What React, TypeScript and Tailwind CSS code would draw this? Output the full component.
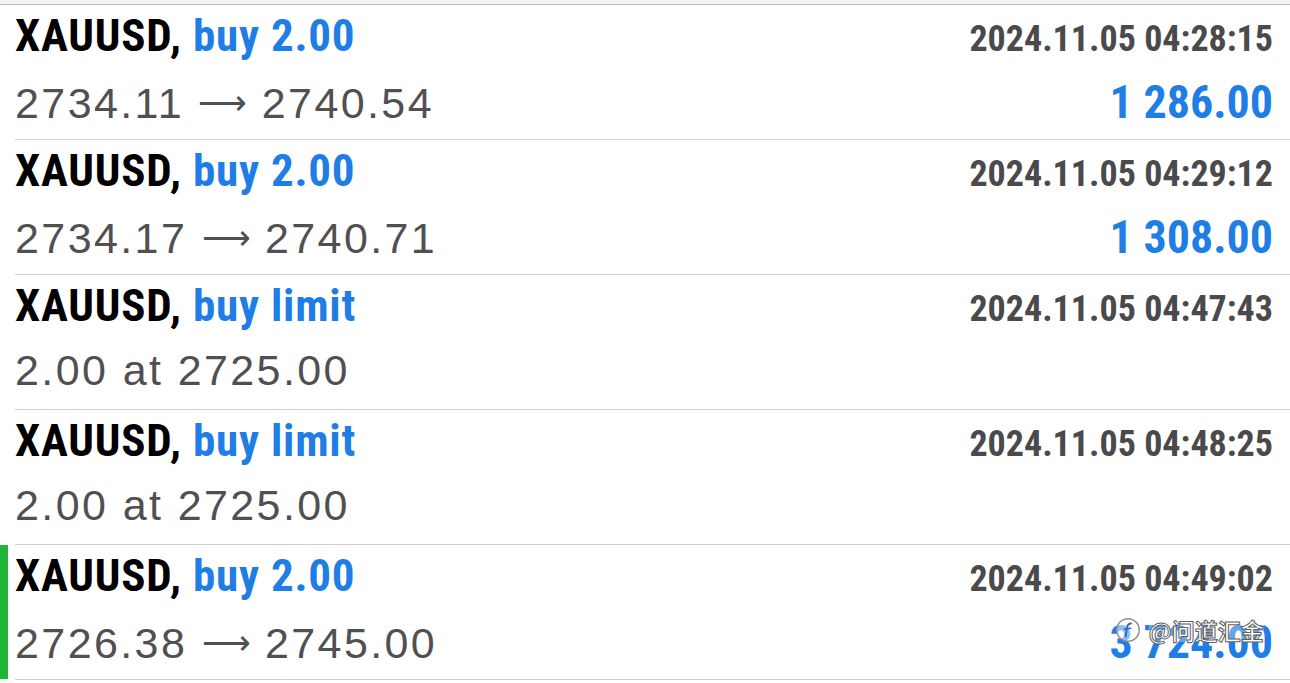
import React from "react";

type Row = {
  action: string;
  date: string;
  a: string;
  b?: string;
  profit?: string;
  active?: boolean;
  watermark?: boolean;
};

const rows: Row[] = [
  { action: "buy 2.00", date: "2024.11.05 04:28:15", a: "2734.11", b: "2740.54", profit: "1 286.00" },
  { action: "buy 2.00", date: "2024.11.05 04:29:12", a: "2734.17", b: "2740.71", profit: "1 308.00" },
  { action: "buy limit", date: "2024.11.05 04:47:43", a: "2.00 at 2725.00" },
  { action: "buy limit", date: "2024.11.05 04:48:25", a: "2.00 at 2725.00" },
  { action: "buy 2.00", date: "2024.11.05 04:49:02", a: "2726.38", b: "2745.00", profit: "3 724.00", active: true, watermark: true },
];

const narrow = { fontFamily: '"Roboto Condensed", Roboto, sans-serif' };
const regular = { fontFamily: '"Liberation Sans", Arial, sans-serif' };

function Watermark() {
  return (
    <div className="absolute left-[5px] top-[-2px] flex items-center gap-[8px] whitespace-nowrap">
      <svg width="26" height="26" viewBox="0 0 30 30">
        <circle cx="15" cy="15" r="13" fill="white" fillOpacity="0.5" stroke="#8f8f8f" strokeWidth="1.6" />
        <path d="M18.5 7.5 C15.5 7.5 14.3 9.5 13.8 12.5 L12.2 22.5" stroke="#2a6fd0" strokeWidth="2.4" fill="none" strokeLinecap="round" />
        <path d="M11 14 L18 13" stroke="#2a6fd0" strokeWidth="2" strokeLinecap="round" />
      </svg>
      <span
        className="bg-white/30 text-[23px] leading-none text-white"
        style={{
          fontFamily: '"Noto Sans CJK SC", sans-serif',
          WebkitTextStroke: "1px #5f5f5f",
        }}
      >
        @问道汇金
      </span>
    </div>
  );
}

function TradeRow({ r }: { r: Row }) {
  return (
    <div className="relative h-[135px]">
      {r.active && <div className="absolute left-0 top-[0px] h-[134px] w-[8px] bg-[#1fb536]" />}
      <div className="ml-[15px] flex h-full flex-col border-b border-[#cfcfcf] pr-[17px]">
        <div className="flex h-[58px] items-baseline justify-between pt-[8px]">
          <div className="text-[45px] font-bold leading-none tracking-[0.8px]" style={narrow}>
            <span className="text-black">XAUUSD, </span>
            <span className="text-[#1f7de6]">{r.action}</span>
          </div>
          <div className="text-[36px] font-bold leading-none text-[#4a4a4c]" style={narrow}>
            {r.date}
          </div>
        </div>
        <div className="flex flex-1 items-baseline justify-between pt-[16px]">
          <div className="whitespace-nowrap text-[43px] leading-none tracking-[2.4px] text-[#505053]" style={regular}>
            {r.a}
            {r.b && (
              <>
                {" "}
                <span
                  className="relative top-[-4px] text-[34px] tracking-normal"
                  style={{ fontFamily: '"DejaVu Sans", sans-serif', fontWeight: 200 }}
                >
                  ⟶
                </span>{" "}
                {r.b}
              </>
            )}
          </div>
          {r.profit && (
            <div className="relative whitespace-nowrap text-[46px] font-bold leading-none text-[#1f7de6]" style={narrow}>
              {r.profit}
              {r.watermark && <Watermark />}
            </div>
          )}
        </div>
      </div>
    </div>
  );
}

export default function App() {
  return (
    <div className="h-[683px] w-[1290px] overflow-hidden bg-white">
      <div className="h-[4px] bg-[#f3f3f3]" />
      <div className="h-[1px] bg-[#bdbdbd]" />
      {rows.map((r, i) => (
        <TradeRow key={i} r={r} />
      ))}
    </div>
  );
}
